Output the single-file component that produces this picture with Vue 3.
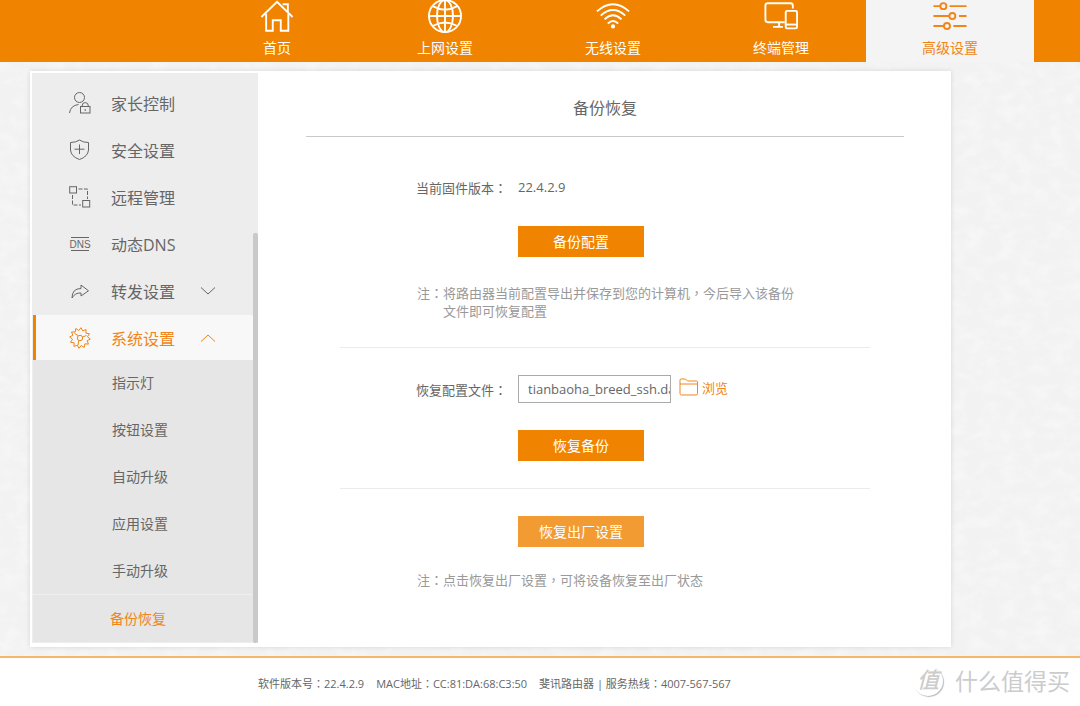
<script setup>
import { ref } from 'vue'

const topNav = [
  { id: 'home', label: '首页' },
  { id: 'globe', label: '上网设置' },
  { id: 'wifi', label: '无线设置' },
  { id: 'device', label: '终端管理' },
  { id: 'tune', label: '高级设置', active: true },
]

const sideNav = [
  { id: 'parent', label: '家长控制' },
  { id: 'shield', label: '安全设置' },
  { id: 'remote', label: '远程管理' },
  { id: 'dns', label: '动态DNS' },
  { id: 'forward', label: '转发设置', arrow: 'down' },
  { id: 'gear', label: '系统设置', arrow: 'up', active: true },
]

const subNav = ['指示灯', '按钮设置', '自动升级', '应用设置', '手动升级', '备份恢复']
const currentSub = '备份恢复'
const fileName = ref('tianbaoha_breed_ssh.dat')

const teeth = Array.from({ length: 24 }, (_, i) => {
  const r = i % 2 ? 7.6 : 10.4
  const a = (i * Math.PI) / 12 + 0.1
  return `${(11 + r * Math.cos(a)).toFixed(2)},${(11 + r * Math.sin(a)).toFixed(2)}`
}).join(' ')
</script>

<template>
  <div class="page">
    <header class="top">
      <nav class="top-nav">
        <a v-for="n in topNav" :key="n.id" href="#" class="top-item" :class="{ active: n.active }">
          <svg class="top-icon" viewBox="0 0 36 36" aria-hidden="true">
            <g v-if="n.id === 'home'">
              <path d="M1.500 18 L18 2 L34.500 18" />
              <path d="M6.500 14.500 V32.500 H13.500 V21.500 H22 V32.500 H30 V14.500" />
              <path d="M24 4.500 H29.500 V12.500" />
            </g>
            <g v-else-if="n.id === 'globe'">
              <circle cx="18" cy="17" r="17" />
              <ellipse cx="18" cy="17" rx="8.500" ry="17" />
              <path d="M18 0 V34 M1 17 H35 M5 6.500 Q18 14 31 6.500 M5 27.500 Q18 20 31 27.500" />
            </g>
            <g v-else-if="n.id === 'wifi'">
              <path d="M1 12 Q18 -3 35 12" />
              <path d="M5 16.500 Q18 4.500 31 16.500" />
              <path d="M9 20.500 Q18 12 27 20.500" />
              <path d="M12.500 25 Q18 19.500 23.500 25" />
              <circle cx="18" cy="28" r="2.200" class="dot" />
            </g>
            <g v-else-if="n.id === 'device'">
              <path d="M22 23.500 H4 Q1.500 23.500 1.500 21 V6 Q1.500 3.500 4 3.500 H28 Q30.500 3.500 30.500 6 V9" />
              <path d="M16 23.500 V28 M9.500 28.500 H20" />
              <rect x="23" y="11.500" width="12" height="18.500" rx="1.500" />
              <path d="M23 26 H35" />
            </g>
            <g v-else>
              <path d="M0.500 6.500 H8 M17.500 6.500 H35.500 M0.500 17 H17 M27.500 17 H35.500 M0.500 27.500 H11.500 M21.500 27.500 H35.500" />
              <circle cx="11" cy="6.500" r="3.200" />
              <circle cx="20.500" cy="17" r="3.200" />
              <circle cx="14.800" cy="27.500" r="3.200" />
            </g>
          </svg>
          <span>{{ n.label }}</span>
        </a>
      </nav>
    </header>

    <main class="main">
      <svg class="paper" aria-hidden="true">
        <filter id="grain">
          <feTurbulence type="fractalNoise" baseFrequency="0.06 0.09" numOctaves="3" seed="4" />
          <feColorMatrix values="0 0 0 0 1  0 0 0 0 1  0 0 0 0 1  2 0 0 0 -0.8" />
        </filter>
        <rect width="100%" height="100%" filter="url(#grain)" />
      </svg>
      <div class="panel">
        <aside class="side">
          <nav class="side-nav">
            <a v-for="n in sideNav" :key="n.id" href="#" class="side-item" :class="{ active: n.active }">
              <svg class="side-icon" viewBox="0 0 22 22" aria-hidden="true">
                <g v-if="n.id === 'parent'">
                  <circle cx="10.500" cy="5.500" r="5" />
                  <path d="M0.500 21 Q1.500 13.500 9.500 12.500" />
                  <rect x="11.500" y="14.500" width="9.500" height="6.500" />
                  <path d="M13 14.500 Q13 10.500 16.200 10.500 T19.500 14.500 M16.200 17 V19" />
                </g>
                <g v-else-if="n.id === 'shield'">
                  <path d="M10.500 1 Q14 3.500 19.500 3.500 V11 Q19 17.500 10.500 20.500 Q2 17.500 1.500 11 V3.500 Q7 3.500 10.500 1 Z" />
                  <path d="M10.500 5.500 V15 M5.500 10.200 H15.500" />
                </g>
                <g v-else-if="n.id === 'remote'">
                  <rect x="0.700" y="0.700" width="6.800" height="6.300" />
                  <rect x="13.700" y="14.500" width="7" height="6.500" />
                  <path d="M9.500 3 H18.500 V13" stroke-dasharray="4 1.500" />
                  <path d="M3.500 9 V19 H12" stroke-dasharray="4 1.500" />
                </g>
                <g v-else-if="n.id === 'dns'">
                  <path d="M2 4.500 H20 M2 17.500 H20" />
                  <text x="11" y="14.500" text-anchor="middle" class="dns-text">DNS</text>
                </g>
                <g v-else-if="n.id === 'forward'">
                  <path d="M3 18 Q3 8.500 12 8.500 V5 L19.500 10.800 L12 16 V13 Q6 12.500 3 18 Z" />
                </g>
                <g v-else>
                  <polygon :points="teeth" />
                  <circle cx="11" cy="11" r="2.700" />
                  <path d="M9.500 8.700 L5.500 6.500 M9.800 13.500 L9 18 M13.500 10 L17.500 8.500" />
                </g>
              </svg>
              <span class="side-label">{{ n.label }}</span>
              <svg v-if="n.arrow" class="arrow" viewBox="0 0 16 10" aria-hidden="true">
                <path :d="n.arrow === 'down' ? 'M1 1.500 L8 8 L15 1.500' : 'M1 8.500 L8 2 L15 8.500'" />
              </svg>
            </a>
            <a v-for="s in subNav" :key="s" href="#" class="sub-item" :class="{ current: s === currentSub }">{{ s }}</a>
          </nav>
          <div class="thumb"></div>
        </aside>

        <section class="content">
          <h1 class="title">备份恢复</h1>
          <form class="form" @submit.prevent>
            <div class="block">
              <div class="row version">
                <span class="label">当前固件版本<i class="mid">：</i></span>
                <span>22.4.2.9</span>
              </div>
              <button type="button" class="btn">备份配置</button>
              <p class="note"><span>注<i class="mid">：</i></span><span>将路由器当前配置导出并保存到您的计算机<i class="mid">，</i>今后导入该备份<br />文件即可恢复配置</span></p>
            </div>
            <div class="block">
              <div class="row">
                <label class="label" for="file">恢复配置文件<i class="mid">：</i></label>
                <input id="file" v-model="fileName" class="file" type="text" />
                <button type="button" class="browse">
                  <svg class="folder" viewBox="0 0 20 18" aria-hidden="true">
                    <path d="M1 15.500 V2 Q1 1 2 1 H6.500 L8.500 3 H17.500 Q18.500 3 18.500 4 V15.500 Q18.500 17 17 17 H2.500 Q1 17 1 15.500 Z M1 6 H18.500" />
                  </svg>
                  <span>浏览</span>
                </button>
              </div>
              <button type="button" class="btn">恢复备份</button>
            </div>
            <div class="block">
              <button type="button" class="btn light">恢复出厂设置</button>
              <p class="note last"><span>注<i class="mid">：</i></span><span>点击恢复出厂设置<i class="mid">，</i>可将设备恢复至出厂状态</span></p>
            </div>
          </form>
        </section>
      </div>
    </main>

    <footer class="foot">
      <span>软件版本号<i class="mid">：</i>22.4.2.9</span>
      <span>MAC地址<i class="mid">：</i>CC:81:DA:68:C3:50</span>
      <span>斐讯路由器 | 服务热线<i class="mid">：</i>4007-567-567</span>
      <div class="mark"><span class="seal">值</span><span>什么值得买</span></div>
    </footer>
  </div>
</template>

<style>
body {
  background: #fff;
}
</style>

<style scoped>
.page {
  font-family: "Open Sans", "Noto Sans CJK SC", sans-serif;
  color: #666;
  min-height: 100vh;
  display: flex;
  flex-direction: column;
  overflow: hidden;
}
.page * {
  box-sizing: border-box;
}
a {
  color: inherit;
  text-decoration: none;
}
svg {
  fill: none;
  stroke: currentColor;
  flex: none;
}
button,
input {
  font-family: inherit;
}
.mid {
  font-family: "Noto Sans CJK TC", sans-serif;
  font-style: normal;
}
.top {
  background: #f08300;
  height: 62px;
}
.top-nav {
  display: flex;
  justify-content: flex-end;
  padding-right: 46px;
  height: 100%;
}
.top-item {
  width: 168px;
  padding-right: 2px;
  display: flex;
  flex-direction: column;
  align-items: center;
  color: #fff;
  font-size: 14px;
  line-height: 28px;
}
.top-item.active {
  padding-right: 0;
  background: #f4f4f4;
  color: #f08519;
}
.top-icon {
  width: 34px;
  height: 34px;
  stroke-width: 2;
}
.dot {
  fill: currentColor;
  stroke: none;
}
.main {
  position: relative;
  background: #f2f2f2;
  padding: 9px 129px 9px 30px;
}
.paper {
  position: absolute;
  inset: 0;
  width: 100%;
  height: 100%;
  stroke: none;
  opacity: 0.4;
}
.panel {
  position: relative;
  display: flex;
  background: #fff;
  padding: 2px 0 4px 2px;
  box-shadow: 0 0 5px rgba(0, 0, 0, 0.12);
}
.side {
  position: relative;
  width: 226px;
  flex: none;
  background: #ededed;
  display: flex;
}
.side-nav {
  flex: 1;
  min-height: 570px;
  padding: 8px 4px 1px 1px;
  display: flex;
  flex-direction: column;
}
.side-item,
.sub-item {
  flex: 1;
  display: flex;
  align-items: center;
  padding-bottom: 2px;
}
.side-item {
  border-left: 3px solid transparent;
  padding-left: 33px;
  font-size: 16px;
}
.side-item.active {
  padding-bottom: 0;
  background: #f8f8f8;
  border-color: #f08300;
  color: #f08519;
}
.side-icon {
  width: 22px;
  height: 22px;
}
.dns-text {
  font: 10px "Liberation Sans", sans-serif;
  fill: currentColor;
  stroke: none;
}
.side-label {
  margin-left: 20px;
  width: 89px;
}
.arrow {
  width: 16px;
  height: 10px;
}
.sub-item {
  background: #e6e6e6;
  padding-left: 79px;
  font-size: 14px;
}
.sub-item.current {
  border-top: 1px solid #efefef;
  padding-left: 77px;
  color: #f08519;
}
.thumb {
  position: absolute;
  right: 0;
  bottom: 0;
  width: 5px;
  height: 72%;
  border-radius: 2px;
  background: #c9c9c9;
}
.content {
  flex: 1;
  padding: 0 47px 0 48px;
}
.title {
  margin: 0;
  padding: 22px 0 15px;
  border-bottom: 1px solid #c9c9c9;
  font-size: 16px;
  line-height: 26px;
  font-weight: 400;
  text-align: center;
}
.form {
  margin: 0 34px;
  font-size: 13px;
}
.block {
  padding: 27px 0 27px 178px;
  border-bottom: 1px solid #ebebeb;
}
.block:first-child {
  padding-top: 40px;
}
.block:last-child {
  border-bottom: 0;
}
.row {
  display: flex;
  align-items: center;
  height: 28px;
  margin: 0 0 27px -102px;
}
.row.version {
  height: 20px;
  margin-bottom: 29px;
}
.label {
  width: 102px;
  flex: none;
}
.btn {
  display: block;
  width: 126px;
  height: 31px;
  padding: 0 0 2px;
  border: 0;
  background: #f08300;
  color: #fff;
  font-size: 14px;
}
.btn.light {
  background: #f29b33;
}
.note {
  display: flex;
  margin: 27px -20px 0 -101px;
  color: #999;
  line-height: 18px;
  white-space: nowrap;
}
.note.last {
  margin-top: 24px;
}
.file {
  width: 153px;
  height: 28px;
  padding: 0 0 0 9px;
  border: 1px solid #aaa;
  background: #fff;
  color: #666;
  font-size: 13px;
}
.browse {
  display: flex;
  align-items: center;
  gap: 3px;
  margin-left: 8px;
  padding: 0 0 4px;
  border: 0;
  background: none;
  color: #f08519;
  font-size: 13px;
}
.folder {
  width: 20px;
  height: 18px;
}
.foot {
  flex: 1;
  display: flex;
  align-items: center;
  gap: 12px;
  min-height: 50px;
  padding: 2px 10px 0 258px;
  border-top: 2px solid #f6b868;
  background: #fff;
  font-size: 11px;
  white-space: nowrap;
}
.mark {
  display: flex;
  align-items: center;
  gap: 10px;
  margin-left: auto;
  padding-bottom: 4px;
  color: #ccc;
  font-size: 23px;
  line-height: 30px;
}
.seal {
  width: 30px;
  height: 30px;
  margin-right: 2px;
  border-radius: 50%;
  box-shadow: 1px 1px 1px #bbb;
  font-size: 22px;
  line-height: 27px;
  font-style: italic;
  font-weight: 500;
  text-align: center;
}
</style>
